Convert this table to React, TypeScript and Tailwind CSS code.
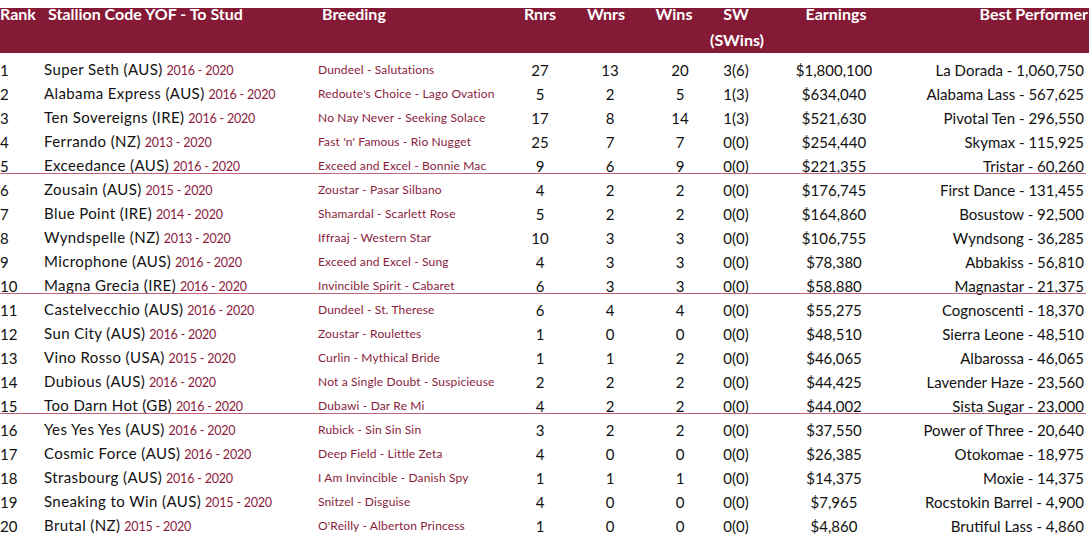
const rows: [string, string, string, string, string, string, string, string, string, string][] = [
  ["1", "Super Seth (AUS)", "2016 - 2020", "Dundeel - Salutations", "27", "13", "20", "3(6)", "$1,800,100", "La Dorada - 1,060,750"],
  ["2", "Alabama Express (AUS)", "2016 - 2020", "Redoute's Choice - Lago Ovation", "5", "2", "5", "1(3)", "$634,040", "Alabama Lass - 567,625"],
  ["3", "Ten Sovereigns (IRE)", "2016 - 2020", "No Nay Never - Seeking Solace", "17", "8", "14", "1(3)", "$521,630", "Pivotal Ten - 296,550"],
  ["4", "Ferrando (NZ)", "2013 - 2020", "Fast 'n' Famous - Rio Nugget", "25", "7", "7", "0(0)", "$254,440", "Skymax - 115,925"],
  ["5", "Exceedance (AUS)", "2016 - 2020", "Exceed and Excel - Bonnie Mac", "9", "6", "9", "0(0)", "$221,355", "Tristar - 60,260"],
  ["6", "Zousain (AUS)", "2015 - 2020", "Zoustar - Pasar Silbano", "4", "2", "2", "0(0)", "$176,745", "First Dance - 131,455"],
  ["7", "Blue Point (IRE)", "2014 - 2020", "Shamardal - Scarlett Rose", "5", "2", "2", "0(0)", "$164,860", "Bosustow - 92,500"],
  ["8", "Wyndspelle (NZ)", "2013 - 2020", "Iffraaj - Western Star", "10", "3", "3", "0(0)", "$106,755", "Wyndsong - 36,285"],
  ["9", "Microphone (AUS)", "2016 - 2020", "Exceed and Excel - Sung", "4", "3", "3", "0(0)", "$78,380", "Abbakiss - 56,810"],
  ["10", "Magna Grecia (IRE)", "2016 - 2020", "Invincible Spirit - Cabaret", "6", "3", "3", "0(0)", "$58,880", "Magnastar - 21,375"],
  ["11", "Castelvecchio (AUS)", "2016 - 2020", "Dundeel - St. Therese", "6", "4", "4", "0(0)", "$55,275", "Cognoscenti - 18,370"],
  ["12", "Sun City (AUS)", "2016 - 2020", "Zoustar - Roulettes", "1", "0", "0", "0(0)", "$48,510", "Sierra Leone - 48,510"],
  ["13", "Vino Rosso (USA)", "2015 - 2020", "Curlin - Mythical Bride", "1", "1", "2", "0(0)", "$46,065", "Albarossa - 46,065"],
  ["14", "Dubious (AUS)", "2016 - 2020", "Not a Single Doubt - Suspicieuse", "2", "2", "2", "0(0)", "$44,425", "Lavender Haze - 23,560"],
  ["15", "Too Darn Hot (GB)", "2016 - 2020", "Dubawi - Dar Re Mi", "4", "2", "2", "0(0)", "$44,002", "Sista Sugar - 23,000"],
  ["16", "Yes Yes Yes (AUS)", "2016 - 2020", "Rubick - Sin Sin Sin", "3", "2", "2", "0(0)", "$37,550", "Power of Three - 20,640"],
  ["17", "Cosmic Force (AUS)", "2016 - 2020", "Deep Field - Little Zeta", "4", "0", "0", "0(0)", "$26,385", "Otokomae - 18,975"],
  ["18", "Strasbourg (AUS)", "2016 - 2020", "I Am Invincible - Danish Spy", "1", "1", "1", "0(0)", "$14,375", "Moxie - 14,375"],
  ["19", "Sneaking to Win (AUS)", "2015 - 2020", "Snitzel - Disguise", "4", "0", "0", "0(0)", "$7,965", "Rocstokin Barrel - 4,900"],
  ["20", "Brutal (NZ)", "2015 - 2020", "O'Reilly - Alberton Princess", "1", "0", "0", "0(0)", "$4,860", "Brutiful Lass - 4,860"],
];

const cols = "grid grid-cols-[44px_274px_192px_60px_80px_60px_52px_144px_178px]";

export default function App() {
  return (
    <div className="w-[1089px] h-[555px] overflow-hidden bg-white font-['Lato',sans-serif] text-[#111]">
      <div className={`${cols} mt-2 h-[45px] bg-[#851a37] text-white font-bold text-[16px] leading-[26px] whitespace-nowrap`}>
        <div className="-mt-[7px]">Rank</div>
        <div className="-mt-[7px] pl-1">Stallion Code YOF - To Stud</div>
        <div className="-mt-[7px] pl-1">Breeding</div>
        <div className="-mt-[7px] text-center">Rnrs</div>
        <div className="-mt-[7px] text-center pr-2">Wnrs</div>
        <div className="-mt-[7px] text-center pr-3">Wins</div>
        <div className="-mt-[7px] text-center">SW<br />(SWins)</div>
        <div className="-mt-[7px] text-center pl-1">Earnings</div>
        <div className="-mt-[7px] text-right -mr-1">Best Performer</div>
      </div>
      <div className="mt-1">
        {rows.map((r) => {
          const sep = r[0] === "5" || r[0] === "10" || r[0] === "15";
          return (
            <div
              key={r[0]}
              className={`${cols} relative h-6 items-center text-[15px] leading-6 ${sep ? "after:absolute after:left-0 after:w-[1086px] after:bottom-[3px] after:h-px after:bg-[#c0607c]" : ""}`}
            >
              <div>{r[0]}</div>
              <div className="whitespace-nowrap">
                <span className="tracking-[0.4px]">{r[1]}</span>{" "}
                <span className="text-[12.5px] tracking-[-0.2px] text-[#8a1c3c]">{r[2]}</span>
              </div>
              <div className="whitespace-nowrap text-[12px] tracking-[0.15px] text-[#8a1c3c]">{r[3]}</div>
              <div className="text-center">{r[4]}</div>
              <div className="text-center">{r[5]}</div>
              <div className="text-center">{r[6]}</div>
              <div className="text-center">{r[7]}</div>
              <div className="text-center">{r[8]}</div>
              <div className="text-right whitespace-nowrap">{r[9]}</div>
            </div>
          );
        })}
      </div>
    </div>
  );
}
